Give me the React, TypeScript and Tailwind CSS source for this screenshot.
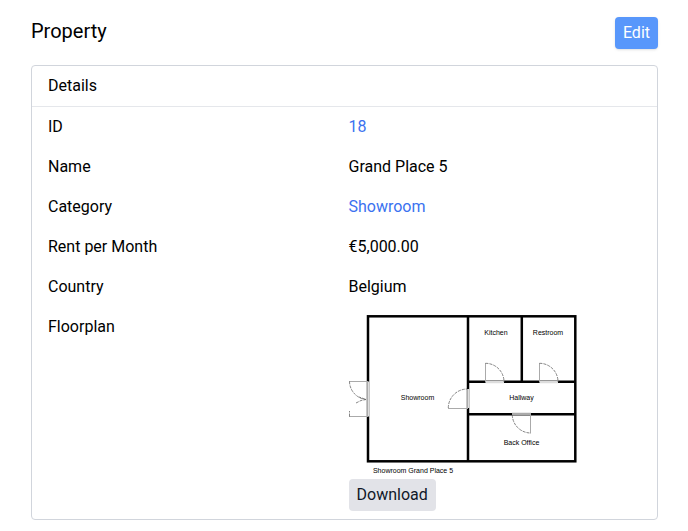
import React from 'react';

type DetailRowProps = {
  label: string;
  children: React.ReactNode;
};

const DetailRow: React.FC<DetailRowProps> = ({ label, children }) => {
  return (
    <div className="grid grid-cols-2 gap-2 px-4 py-2">
      <dt>{label}</dt>
      <dd>{children}</dd>
    </div>
  );
};

const Floorplan: React.FC = () => {
  return (
    <svg
      role="img"
      aria-label="Floorplan"
      className="block h-[164px] w-[230px]"
      viewBox="349 315 230 164"
      fill="none"
    >
      {/* walls */}
      <g stroke="#000" strokeWidth="2.5">
        <rect x="368" y="316.3" width="207.3" height="145" />
        <path d="M468 316V461M521.8 316V382M468 381.8H575M468 414.3H575" />
      </g>
      {/* door openings */}
      <path
        d="M368 381.5V416.5M468 389V408M485.5 382H504M539.5 382H558"
        stroke="#ddd"
        strokeWidth="2.5"
      />
      <path d="M512 414H531" stroke="#aaa" strokeWidth="2.5" />
      {/* door leaves */}
      <path
        d="M367.5 381V416.5M349 381.5H368M349 416.5H368M448 408.5H468M467.5 389V408M485.5 363V382M539.5 363V382M530.5 414V433.5"
        stroke="#aaa"
      />
      {/* door swings */}
      <g stroke="#666" strokeWidth="0.8" strokeDasharray="3 1">
        <path d="M349.5 381.5A18.5 18.5 0 0 0 366 399.5" />
        <path d="M349.5 416.5V411M356 403L361 400.5L366 399.5L359 397" />
        <path d="M448.3 408A19 19 0 0 1 467 389" />
        <path d="M485.5 363.3A18.5 18.5 0 0 1 504 382" />
        <path d="M539.5 363.3A18.5 18.5 0 0 1 558 382" />
        <path d="M512.3 415A18.5 18.5 0 0 0 530.5 433" />
      </g>
      <g
        fill="#000"
        fontFamily="'Liberation Sans', sans-serif"
        fontSize="7"
        textAnchor="middle"
      >
        <text x="417.5" y="400">Showroom</text>
        <text x="496" y="335">Kitchen</text>
        <text x="548" y="335">Restroom</text>
        <text x="521.5" y="400">Hallway</text>
        <text x="521.5" y="445">Back Office</text>
        <text x="413" y="473">Showroom Grand Place 5</text>
      </g>
    </svg>
  );
};

const App: React.FC = () => {
  return (
    <main className="min-h-screen bg-white py-4 pr-[30px] pl-[31px] font-['Roboto',sans-serif] text-base text-black">
      <div className="flex items-start justify-between pt-px">
        <h1 className="text-xl">Property</h1>
        <button className="h-8 cursor-pointer rounded bg-[#5897fb] px-2 text-white shadow-sm">
          Edit
        </button>
      </div>
      <section className="mt-4 rounded border border-gray-300">
        <h2 className="border-b border-gray-200 px-4 py-2">Details</h2>
        <dl>
          <DetailRow label="ID">
            <a href="#" className="text-[#3b72f0]">
              18
            </a>
          </DetailRow>
          <DetailRow label="Name">Grand Place 5</DetailRow>
          <DetailRow label="Category">
            <a href="#" className="text-[#3b72f0]">
              Showroom
            </a>
          </DetailRow>
          <DetailRow label="Rent per Month">€5,000.00</DetailRow>
          <DetailRow label="Country">Belgium</DetailRow>
          <DetailRow label="Floorplan">
            <Floorplan />
            <button className="h-8 cursor-pointer rounded bg-[#e2e3e8] px-2 text-gray-900">
              Download
            </button>
          </DetailRow>
        </dl>
      </section>
    </main>
  );
};

export default App;
